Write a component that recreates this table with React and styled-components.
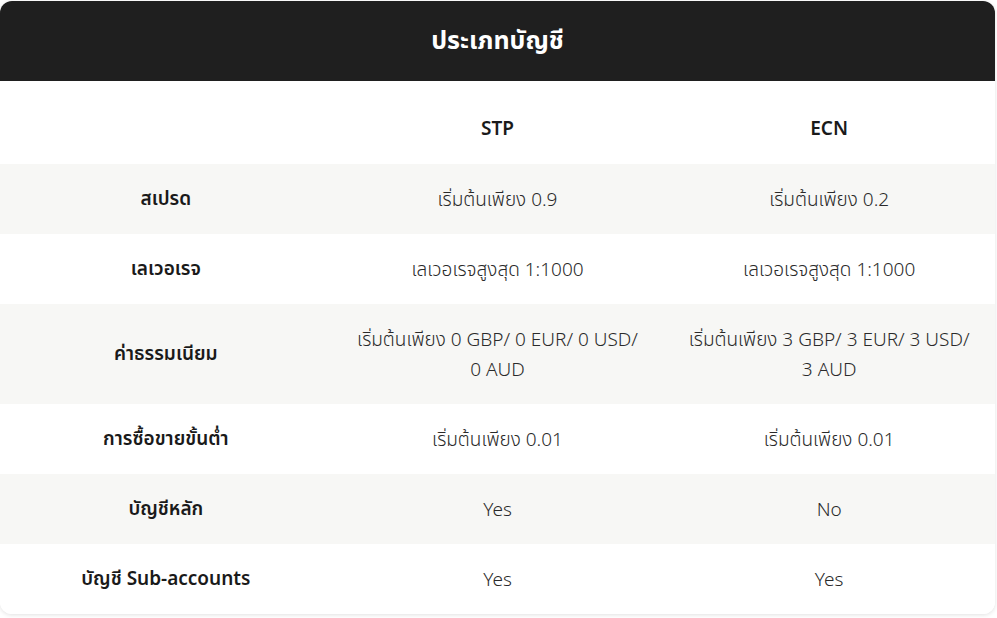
import styled, { createGlobalStyle } from "styled-components";

const GlobalStyle = createGlobalStyle`
  body {
    margin: 0;
    background: #ffffff;
    font-family: "Noto Sans", "Noto Sans Thai", sans-serif;
  }
`;

const Page = styled.div`
  padding: 1px 2px 4px 0;
`;

const Card = styled.div`
  width: 995px;
  border-radius: 12px;
  overflow: hidden;
  background: #ffffff;
  box-shadow: 0 1px 4px rgba(0, 0, 0, 0.12);
`;

const Header = styled.div`
  height: 80px;
  display: flex;
  align-items: center;
  justify-content: center;
  background: #1f1f1f;
  color: #ffffff;
  font-size: 25px;
  font-weight: 700;
`;

const Table = styled.table`
  width: 100%;
  border-collapse: collapse;
  table-layout: fixed;
`;

const Row = styled.tr`
  background: ${(p) => (p.$shaded ? "#f7f7f5" : "#ffffff")};
  height: ${(p) => p.$height || 70}px;
`;

const HeadCell = styled.th`
  font-size: 19px;
  font-weight: 600;
  color: #1a1a1a;
  text-align: center;
  padding: 10px 20px 0;
`;

const LabelCell = styled.td`
  font-size: 19px;
  font-weight: 600;
  color: #1a1a1a;
  text-align: center;
  padding: 0 20px;
`;

const ValueCell = styled.td`
  font-size: 19px;
  font-weight: 300;
  line-height: 30px;
  color: #2a2a2a;
  text-align: center;
  padding: 0 21px;
`;

const rows = [
  { label: "สเปรด", stp: "เริ่มต้นเพียง 0.9", ecn: "เริ่มต้นเพียง 0.2" },
  { label: "เลเวอเรจ", stp: "เลเวอเรจสูงสุด 1:1000", ecn: "เลเวอเรจสูงสุด 1:1000" },
  {
    label: "ค่าธรรมเนียม",
    stp: "เริ่มต้นเพียง 0 GBP/ 0 EUR/ 0 USD/ 0 AUD",
    ecn: "เริ่มต้นเพียง 3 GBP/ 3 EUR/ 3 USD/ 3 AUD",
    height: 100,
  },
  { label: "การซื้อขายขั้นต่ำ", stp: "เริ่มต้นเพียง 0.01", ecn: "เริ่มต้นเพียง 0.01" },
  { label: "บัญชีหลัก", stp: "Yes", ecn: "No" },
  { label: "บัญชี Sub-accounts", stp: "Yes", ecn: "Yes" },
];

export default function App() {
  return (
    <>
      <GlobalStyle />
      <Page>
        <Card>
          <Header>ประเภทบัญชี</Header>
          <Table>
            <thead>
              <Row $height={83}>
                <HeadCell />
                <HeadCell>STP</HeadCell>
                <HeadCell>ECN</HeadCell>
              </Row>
            </thead>
            <tbody>
              {rows.map((r, i) => (
                <Row key={r.label} $shaded={i % 2 === 0} $height={r.height}>
                  <LabelCell>{r.label}</LabelCell>
                  <ValueCell>{r.stp}</ValueCell>
                  <ValueCell>{r.ecn}</ValueCell>
                </Row>
              ))}
            </tbody>
          </Table>
        </Card>
      </Page>
    </>
  );
}
